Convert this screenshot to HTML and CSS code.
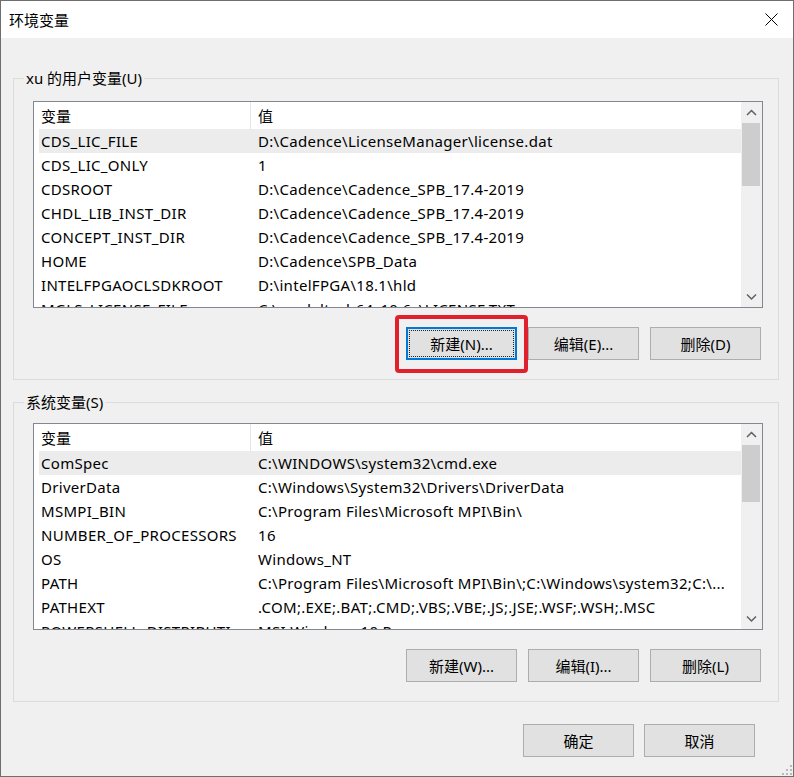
FILE: index.html
```html
<!DOCTYPE html>
<html lang="zh-CN">
  <head>
    <meta charset="UTF-8" />
    <meta name="viewport" content="width=device-width, initial-scale=1.0" />
    <title>环境变量</title>
    <link rel="stylesheet" href="styles.css">
  </head>

  <body>
    <div class="window">
      <div class="titlebar">
        <span class="title">环境变量</span>
        <svg class="close" width="13" height="13" viewBox="0 0 13 13">
          <path d="M0.5 0.5 L12.5 12.5 M12.5 0.5 L0.5 12.5" stroke="#000" stroke-width="1" fill="none" />
        </svg>
      </div>

      <div class="content">
        <!-- User variables -->
        <fieldset class="group">
          <legend>xu 的用户变量(U)</legend>
          <div class="list">
            <div class="list-main">
              <div class="list-head">
                <span class="cell name">变量</span>
                <span class="cell value">值</span>
              </div>
              <div class="row selected"><span class="cell name">CDS_LIC_FILE</span><span class="cell value">D:\Cadence\LicenseManager\license.dat</span></div>
              <div class="row"><span class="cell name">CDS_LIC_ONLY</span><span class="cell value">1</span></div>
              <div class="row"><span class="cell name">CDSROOT</span><span class="cell value">D:\Cadence\Cadence_SPB_17.4-2019</span></div>
              <div class="row"><span class="cell name">CHDL_LIB_INST_DIR</span><span class="cell value">D:\Cadence\Cadence_SPB_17.4-2019</span></div>
              <div class="row"><span class="cell name">CONCEPT_INST_DIR</span><span class="cell value">D:\Cadence\Cadence_SPB_17.4-2019</span></div>
              <div class="row"><span class="cell name">HOME</span><span class="cell value">D:\Cadence\SPB_Data</span></div>
              <div class="row"><span class="cell name">INTELFPGAOCLSDKROOT</span><span class="cell value">D:\intelFPGA\18.1\hld</span></div>
              <div class="row"><span class="cell name">MGLS_LICENSE_FILE</span><span class="cell value">C:\modeltech64_10.6c\LICENSE.TXT</span></div>
            </div>
            <div class="scrollbar">
              <svg class="arrow" width="21" height="21" viewBox="0 0 21 21"><path d="M6 13 L10.5 8.5 L15 13" stroke="#606060" stroke-width="1.5" fill="none" /></svg>
              <div class="thumb thumb-user"></div>
              <div class="track"></div>
              <svg class="arrow" width="21" height="21" viewBox="0 0 21 21"><path d="M6 8.5 L10.5 13 L15 8.5" stroke="#606060" stroke-width="1.5" fill="none" /></svg>
            </div>
          </div>
          <div class="btn-row">
            <span class="marked"><button class="btn default">新建(N)...</button></span>
            <button class="btn">编辑(E)...</button>
            <button class="btn">删除(D)</button>
          </div>
        </fieldset>

        <!-- System variables -->
        <fieldset class="group system">
          <legend>系统变量(S)</legend>
          <div class="list">
            <div class="list-main">
              <div class="list-head">
                <span class="cell name">变量</span>
                <span class="cell value">值</span>
              </div>
              <div class="row selected"><span class="cell name">ComSpec</span><span class="cell value">C:\WINDOWS\system32\cmd.exe</span></div>
              <div class="row"><span class="cell name">DriverData</span><span class="cell value">C:\Windows\System32\Drivers\DriverData</span></div>
              <div class="row"><span class="cell name">MSMPI_BIN</span><span class="cell value">C:\Program Files\Microsoft MPI\Bin\</span></div>
              <div class="row"><span class="cell name">NUMBER_OF_PROCESSORS</span><span class="cell value">16</span></div>
              <div class="row"><span class="cell name">OS</span><span class="cell value">Windows_NT</span></div>
              <div class="row"><span class="cell name">PATH</span><span class="cell value">C:\Program Files\Microsoft MPI\Bin\;C:\Windows\system32;C:\...</span></div>
              <div class="row"><span class="cell name">PATHEXT</span><span class="cell value">.COM;.EXE;.BAT;.CMD;.VBS;.VBE;.JS;.JSE;.WSF;.WSH;.MSC</span></div>
              <div class="row"><span class="cell name">POWERSHELL_DISTRIBUTI...</span><span class="cell value">MSI:Windows 10 Pro</span></div>
            </div>
            <div class="scrollbar">
              <svg class="arrow" width="21" height="21" viewBox="0 0 21 21"><path d="M6 13 L10.5 8.5 L15 13" stroke="#606060" stroke-width="1.5" fill="none" /></svg>
              <div class="thumb thumb-system"></div>
              <div class="track"></div>
              <svg class="arrow" width="21" height="21" viewBox="0 0 21 21"><path d="M6 8.5 L10.5 13 L15 8.5" stroke="#606060" stroke-width="1.5" fill="none" /></svg>
            </div>
          </div>
          <div class="btn-row">
            <button class="btn">新建(W)...</button>
            <button class="btn">编辑(I)...</button>
            <button class="btn">删除(L)</button>
          </div>
        </fieldset>

        <div class="dialog-btns">
          <button class="btn">确定</button>
          <button class="btn">取消</button>
        </div>
      </div>

      <!-- Size grip -->
      <svg class="grip" width="10" height="10" viewBox="0 0 10 10">
        <rect x="8" y="0" width="2" height="2" fill="#b9b9b9" />
        <rect x="4" y="4" width="2" height="2" fill="#b9b9b9" />
        <rect x="8" y="4" width="2" height="2" fill="#b9b9b9" />
        <rect x="0" y="8" width="2" height="2" fill="#b9b9b9" />
        <rect x="4" y="8" width="2" height="2" fill="#b9b9b9" />
        <rect x="8" y="8" width="2" height="2" fill="#b9b9b9" />
      </svg>
    </div>
  </body>
</html>
```

FILE: styles.css
```css
body {
  margin: 0;
  background-color: #f0f0f0;
}

.window {
  position: relative;
  width: 794px;
  height: 777px;
  box-sizing: border-box;
  border: 1px solid #6e6e6e;
  background-color: #f0f0f0;
  font-family: "Noto Sans", "Noto Sans CJK SC", sans-serif;
  font-size: 15px;
  color: #000;
}

.titlebar {
  height: 37px;
  background-color: #fff;
  display: flex;
  align-items: center;
  justify-content: space-between;
  padding: 0 15px 0 8px;
}

.close {
  display: block;
}

.content {
  padding: 30px 14px 0 12px;
}

/* Group boxes */
.group {
  margin: 0;
  border: 1px solid #dcdcdc;
  padding: 13px 15px 19px 19px;
}

.group.system {
  margin-top: 12px;
  padding-top: 11px;
}

.group legend {
  padding: 0 2px;
  margin-left: -9px;
  line-height: 20px;
}

/* List view */
.list {
  height: 207px;
  box-sizing: border-box;
  border: 1px solid #828790;
  background-color: #fff;
  display: flex;
}

.list-main {
  flex: 1;
  overflow: hidden;
  white-space: nowrap;
}

.list-head {
  display: flex;
  height: 27px;
  line-height: 28px;
  margin-left: 5px;
}

.list-head .name {
  border-right: 1px solid #e5e5e5;
  box-sizing: border-box;
}

.row {
  display: flex;
  height: 24px;
  line-height: 24px;
  margin-left: 5px;
  letter-spacing: 0.3px;
}

.row.selected {
  background-color: #ececec;
}

.cell {
  overflow: hidden;
  text-overflow: ellipsis;
}

.cell.name {
  width: 212px;
  flex: none;
  padding-left: 2px;
  box-sizing: border-box;
}

.cell.value {
  flex: 1;
  padding-left: 7px;
}

/* Scrollbar */
.scrollbar {
  width: 21px;
  flex: none;
  background-color: #f0f0f0;
  display: flex;
  flex-direction: column;
}

.arrow {
  display: block;
  flex: none;
}

.thumb {
  flex: none;
  margin: 0 2px 0 1px;
  background-color: #cdcdcd;
}

.thumb-user {
  height: 63px;
}

.thumb-system {
  height: 57px;
}

.track {
  flex: 1;
}

/* Buttons */
.btn-row {
  display: flex;
  justify-content: flex-end;
  gap: 11px;
  margin-top: 19px;
  padding-right: 2px;
}

.btn {
  width: 111px;
  height: 33px;
  padding: 0;
  background-color: #e1e1e1;
  border: 1px solid #adadad;
  font: inherit;
  color: #000;
}

.btn.default {
  border: 2px solid #0078d7;
  outline: 1px dotted #222;
  outline-offset: -4px;
}

.marked {
  position: relative;
  display: block;
}

.marked::after {
  content: "";
  position: absolute;
  top: -12px;
  left: -11px;
  right: -11px;
  bottom: -13px;
  border: 4px solid #e0212d;
  border-radius: 4px;
  pointer-events: none;
}

.dialog-btns {
  display: flex;
  justify-content: flex-end;
  gap: 10px;
  margin-top: 22px;
  padding-right: 24px;
}

.grip {
  position: absolute;
  right: 1px;
  bottom: 1px;
}
```
